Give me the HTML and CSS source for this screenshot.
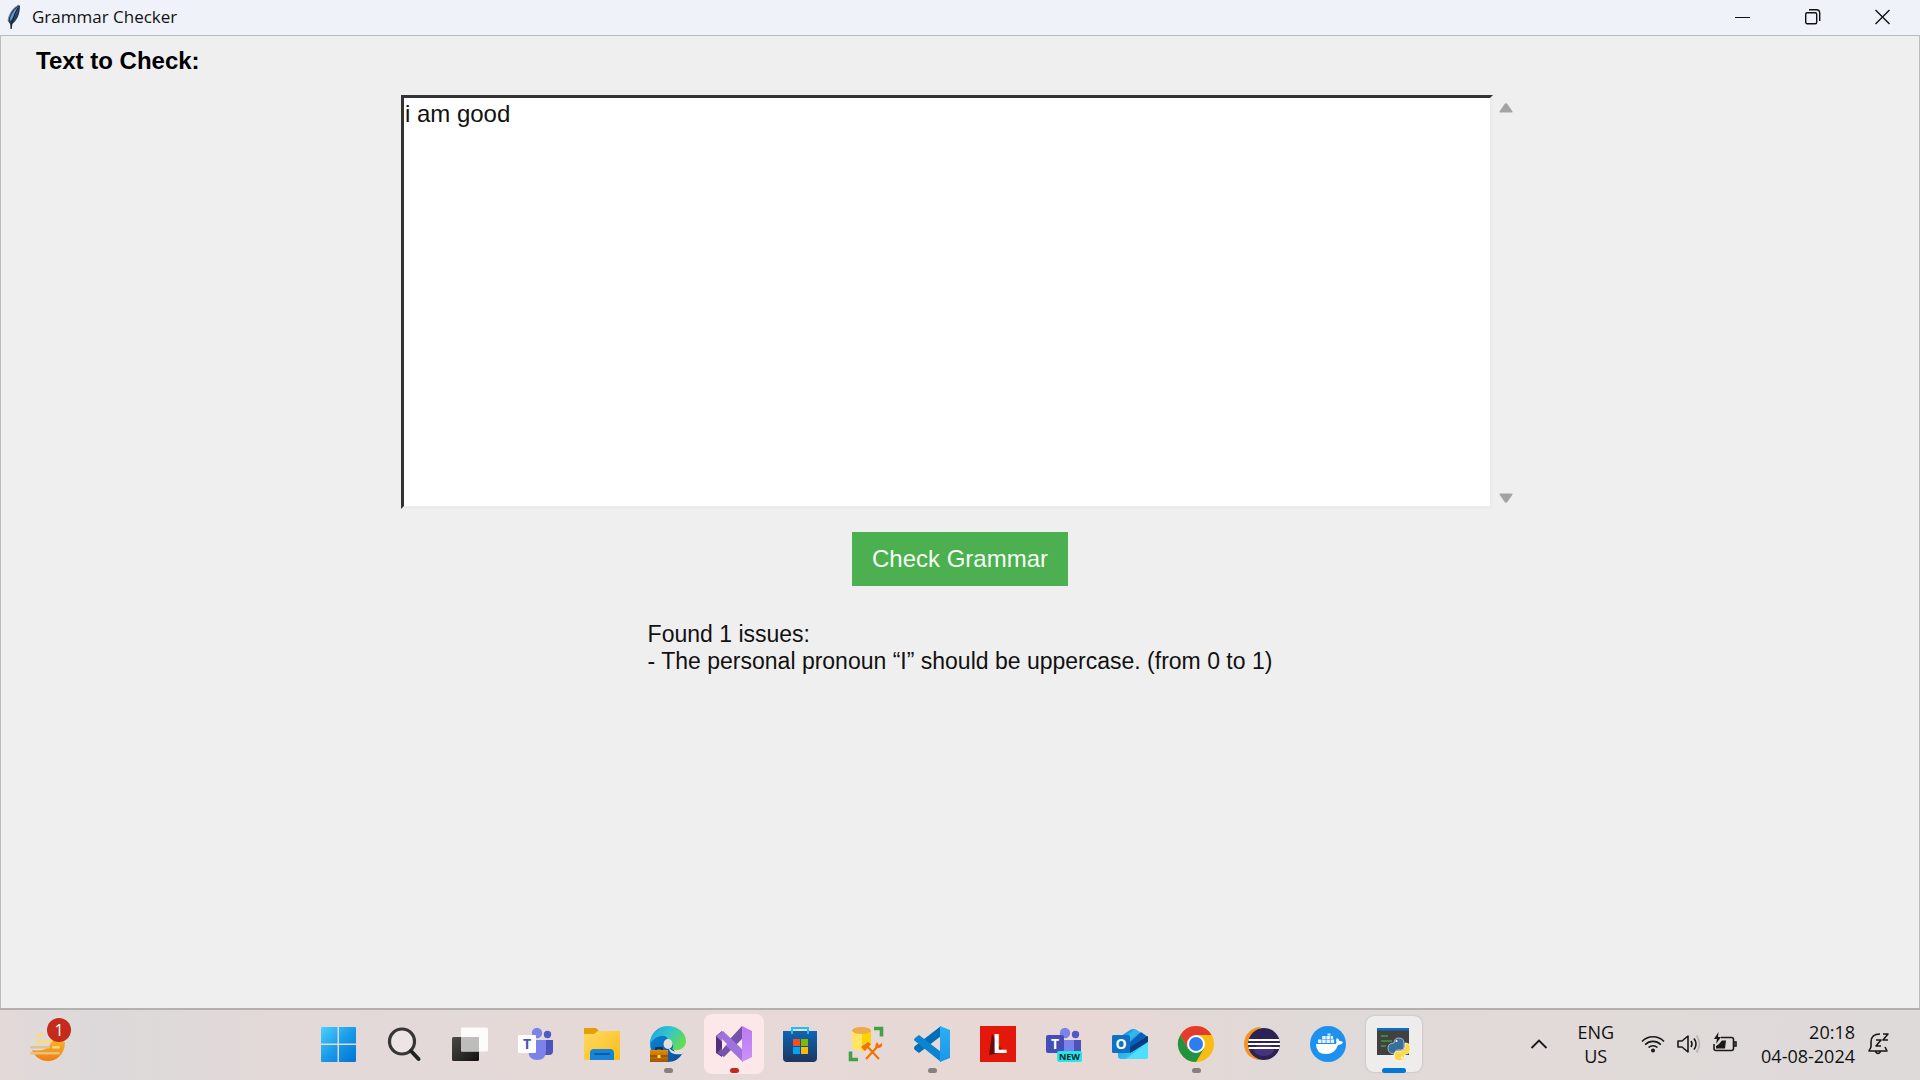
FILE: index.html
```html
<!DOCTYPE html>
<html lang="en">
<head>
<meta charset="utf-8">
<title>Grammar Checker</title>
<link rel="stylesheet" href="styles.css">
</head>
<body>
<div class="window">
  <header class="titlebar">
    <svg class="feather" width="16" height="26" viewBox="0 0 16 26" aria-hidden="true">
      <path d="M12 1C7 3 2 9 1 17l2 3 1 5 1-5c5-3 8-10 8-18z" fill="#23405f"/>
      <path d="M11 3C7 6 3 11 3 17c4-3 8-9 8-14z" fill="#5d9be0"/>
      <path d="M11 4C8 9 5 15 4 25" stroke="#222" stroke-width="1.3" fill="none"/>
      <path d="M12 1C7 3 2 9 1 17" stroke="#888" fill="none"/>
    </svg>
    <h1 class="title">Grammar Checker</h1>
    <div class="controls">
      <button class="control" aria-label="Minimize"><svg width="16" height="16" viewBox="0 0 16 16"><path d="M0 8.500h15" stroke="#111" fill="none"/></svg></button>
      <button class="control" aria-label="Restore"><svg width="16" height="16" viewBox="0 0 16 16" fill="none" stroke="#111" stroke-width="1.4"><rect x=".7" y="3.700" width="11" height="11" rx="1.500"/><path d="M4 .7h7.500q3.200 0 3.200 3.200V12"/></svg></button>
      <button class="control" aria-label="Close"><svg width="16" height="16" viewBox="0 0 16 16"><path d="M.5 1l14 14M14.500 1l-14 14" stroke="#111" stroke-width="1.4" fill="none"/></svg></button>
    </div>
  </header>

  <main class="content">
    <label class="label" for="source">Text to Check:</label>
    <div class="editor">
      <textarea class="source" id="source" rows="15" spellcheck="false">i am good</textarea>
      <div class="scrollbar">
        <button class="arrow" aria-label="Scroll up"><svg width="14" height="10" viewBox="0 0 14 10"><path d="M1 9.500Q0 9.500 .8 8L5.500 1.200Q7 -.5 8.500 1.200L13.200 8Q14 9.500 13 9.500z" fill="#a3a3a3"/></svg></button>
        <button class="arrow" aria-label="Scroll down"><svg width="14" height="10" viewBox="0 0 14 10"><path d="M1 .5Q0 .5 .8 2L5.500 8.800Q7 10.500 8.500 8.800L13.200 2Q14 .5 13 .5z" fill="#a3a3a3"/></svg></button>
      </div>
    </div>
    <button class="check">Check Grammar</button>
    <output class="result" for="source">Found 1 issues:
- The personal pronoun “I” should be uppercase. (from 0 to 1)</output>
  </main>
</div>

<footer class="taskbar">
  <svg width="0" height="0" class="defs" aria-hidden="true">
    <defs>
      <linearGradient id="win" x1="0" y1="0" x2="1" y2="1"><stop offset="0" stop-color="#4cd0fb"/><stop offset=".5" stop-color="#1a9be8"/><stop offset="1" stop-color="#0074d4"/></linearGradient>
      <linearGradient id="sun" x1="0" y1="0" x2="0" y2="1"><stop offset="0" stop-color="#f3b52c"/><stop offset="1" stop-color="#f47a14"/></linearGradient>
      <linearGradient id="dark" x1="0" y1="0" x2="1" y2="1"><stop offset="0" stop-color="#4a4a46"/><stop offset="1" stop-color="#111"/></linearGradient>
      <linearGradient id="folder" x1="0" y1="0" x2="1" y2="1"><stop offset="0" stop-color="#ffd966"/><stop offset="1" stop-color="#fbbd14"/></linearGradient>
      <linearGradient id="edgeTop" x1="0" y1="0" x2="1" y2=".5"><stop offset="0" stop-color="#1c9fe2"/><stop offset=".5" stop-color="#30c4d0"/><stop offset="1" stop-color="#62dd53"/></linearGradient>
      <linearGradient id="edgeLow" x1="0" y1="0" x2="1" y2="1"><stop offset="0" stop-color="#0a87d8"/><stop offset="1" stop-color="#0b4a98"/></linearGradient>
      <linearGradient id="case" x1="0" y1="0" x2="0" y2="1"><stop offset="0" stop-color="#e98b04"/><stop offset="1" stop-color="#9f5406"/></linearGradient>
      <linearGradient id="store" x1="0" y1="0" x2="0" y2="1"><stop offset="0" stop-color="#0d66b5"/><stop offset="1" stop-color="#20345f"/></linearGradient>
      <linearGradient id="vsR" x1="0" y1="0" x2="0" y2="1"><stop offset="0" stop-color="#b97af1"/><stop offset="1" stop-color="#cb92fb"/></linearGradient>
      <linearGradient id="code" x1="0" y1="0" x2="0" y2="1"><stop offset="0" stop-color="#2bb0f5"/><stop offset="1" stop-color="#1b96ea"/></linearGradient>
      <linearGradient id="out" x1="0" y1="0" x2="1" y2="1"><stop offset="0" stop-color="#1486d8"/><stop offset="1" stop-color="#4ae1ff"/></linearGradient>
    </defs>
  </svg>

  <div class="side">
    <button class="widgets" aria-label="Widgets">
      <svg width="36" height="30" viewBox="0 0 36 30">
        <path d="M2 17q12 2 17-4l4-6 12 2C35 21 27 28 18 28 10 28 4 23 2 17z" fill="url(#sun)"/>
        <g fill="#f3d873"><rect x="6" y="1" width="8" height="2.600" rx="1" fill="#fbdc6d"/><rect x="6" y="7" width="16" height="2.600" rx="1" fill="#fbdc6d"/><rect y="13" width="20" height="2.600" rx="1" fill="#dcc48b"/><rect x="22" y="13" width="8" height="2.600" rx="1"/><rect y="19" width="30" height="2.600" rx="1" fill="#e5c27a"/></g>
      </svg>
      <span class="badge">1</span>
    </button>
  </div>

  <nav class="apps" aria-label="Apps">
    <button class="app" aria-label="Start"><svg class="icon" viewBox="0 0 36 36"><path d="M2 1h15.500v16.500H1V2q0-1 1-1zM19 1h16q1 0 1 1v15.500H19zM1 19h16.500v17H2q-1 0-1-1zM19 19h17v16q0 1-1 1H19z" fill="url(#win)"/></svg></button>
    <button class="app" aria-label="Search"><svg class="icon" viewBox="0 0 36 36"><circle cx="16" cy="15.500" r="12.500" fill="#efe9e8" fill-opacity=".7" stroke="#363634" stroke-width="3.200"/><path d="M25 25l7.500 8" stroke="#222" stroke-width="4" stroke-linecap="round"/></svg></button>
    <button class="app" aria-label="Task view"><svg class="icon" viewBox="0 0 36 36"><rect y="11" width="27" height="24" rx="1.500" fill="url(#dark)"/><rect x="9" y="1.500" width="27" height="24" rx="1.500" fill="#fff" fill-opacity=".9"/><path d="M9 11h18v14.500H9z" fill="#bdbdbc"/></svg></button>
    <button class="app" aria-label="Teams"><svg class="icon" viewBox="0 0 36 36"><circle cx="29.500" cy="8.500" r="3.700" fill="#5059c9"/><path d="M26 14h9v11q0 4-4 4h-7z" fill="#4b53bc"/><circle cx="19" cy="7" r="5.200" fill="#7b83eb"/><path d="M14 14h14v11q0 9-9 9-8 0-8.500-8z" fill="#7b83eb"/><rect y="9" width="18" height="18" rx="1" fill="#fff"/><text x="9" y="23" class="glyph" font-size="14" fill="#4b53bc">T</text></svg></button>
    <button class="app" aria-label="File Explorer"><svg class="icon" viewBox="0 0 36 36"><path d="M0 2h12l3 3v4H0z" fill="#e0a006"/><path d="M0 8h10l4-3h22v29H0z" fill="url(#folder)"/><path d="M6 34v-7q0-4 4-4h16q4 0 4 4v7z" fill="#1784d8"/><path d="M11 28h14" stroke="#0a5ca8" stroke-width="2" stroke-linecap="round"/></svg></button>
    <button class="app" aria-label="Edge"><svg class="icon" viewBox="0 0 36 36"><path d="M0 16C3 5 24 4 23 20c0 9 9 9 10 6C30 33 24 36 18 36 8 36 0 30 0 16z" fill="url(#edgeLow)"/><path d="M0 18C0 7 8 0 18 0s18 7 18 15c0 8-9 11-14 8 3-3-1-9-4-9C17 7 5 9 0 18z" fill="url(#edgeTop)"/><ellipse cx="18" cy="18" rx="4.500" ry="5" fill="#e4dedc"/><path d="M19 22c4 5 11 4 14 3l-1 3c-6 1-13 0-13-6z" fill="#e4dedc"/><path d="M6 24v-2h6v2" stroke="#222" stroke-width="1.500" fill="none"/><rect y="24" width="18" height="12" fill="url(#case)"/><path d="M0 30h18" stroke="#764007"/><rect x="7.500" y="29" width="3" height="3" fill="#ffe04a"/></svg><span class="dot"></span></button>
    <button class="app alert" aria-label="Visual Studio"><svg class="icon" viewBox="0 0 36 36"><path d="M0 10l6-5v26l-6-4z" fill="#523078"/><path d="M26 0l1 12L8 31l-7-4z" fill="#7652ad"/><path d="M0 10l7-5 20 19v12z" fill="#9f72dc"/><path d="M6 13l5 5-5 6z" fill="#fce8e9"/><path d="M26 0l10 5v26l-10 5z" fill="url(#vsR)"/></svg><span class="dot red"></span></button>
    <button class="app" aria-label="Microsoft Store"><svg class="icon" viewBox="0 0 36 36"><path d="M10 7V2h16v5" fill="none" stroke="#25baf4" stroke-width="2"/><path d="M1 5h34v27q0 4-4 4H5q-4 0-4-4z" fill="url(#store)"/><path d="M10 8V5M26 8V5" stroke="#25baf4" stroke-width="2"/><path d="M11 13h7v7h-7z" fill="#f25022"/><path d="M19 13h7v7h-7z" fill="#7fba00"/><path d="M11 21h7v7h-7z" fill="#00a4ef"/><path d="M19 21h7v7h-7z" fill="#ffb900"/></svg></button>
    <button class="app" aria-label="Database tools"><svg class="icon" viewBox="0 0 36 36"><path d="M4 4h19v19q-10 4-19-1z" fill="#ffe466"/><path d="M14 4h9v18q-4 3-9 3z" fill="#fcd307"/><ellipse cx="13.500" cy="4.500" rx="9.500" ry="3.500" fill="#efa94b"/><path d="M26 2.500h7.500v8M2.500 25.500v8H10" fill="none" stroke="#43a047" stroke-width="3.600"/><path d="M18 33l11-12M31 33L17 18" stroke="#ecd9d4" stroke-width="5"/><path d="M18 33l12-13M31 33L18 19" stroke="#ef7408" stroke-width="2.200"/><path d="M13 21l7-5 3 2-6 7z" fill="#ef7408"/><path d="M29 16q-4 6 1 6 5 0 4-5l-3 2z" fill="#ef7408"/></svg></button>
    <button class="app" aria-label="Visual Studio Code"><svg class="icon" viewBox="0 0 36 36"><path d="M27 0v10L5 27l-4-3q-2-2 0-4z" fill="#006fb6"/><path d="M5 9l22 17v10L1 15q-2-1 0-3z" fill="#0b85cf"/><path d="M26 0l10 4v28l-10 4z" fill="url(#code)"/></svg><span class="dot"></span></button>
    <button class="app" aria-label="L"><svg class="icon" viewBox="0 0 36 36"><path d="M0 0h36v36H0z" fill="#e3170a"/><path d="M12 8L9 29l14-3z" fill="#6d0b05"/><text x="20" y="27" class="glyph" font-size="27" fill="#fff">L</text></svg></button>
    <button class="app" aria-label="Teams New"><svg class="icon" viewBox="0 0 36 36"><circle cx="29.500" cy="8.500" r="3.700" fill="#5059c9"/><path d="M24 14h11v12H24z" fill="#4b53bc"/><circle cx="19" cy="7" r="5.200" fill="#7b83eb"/><path d="M14 14h14v12H14z" fill="#7b83eb"/><rect y="9" width="18" height="18" rx="2" fill="#454db8"/><text x="9" y="23" class="glyph" font-size="14" fill="#fff">T</text><rect x="11" y="25" width="25" height="11" rx="2" fill="#28e5e5"/><text x="23.500" y="34" class="glyph" font-size="9" fill="#06292b">NEW</text></svg></button>
    <button class="app" aria-label="Outlook"><svg class="icon" viewBox="0 0 36 36"><path d="M6 12L18 4q3-2 6 0l12 8v18q0 3-3 3H9q-3 0-3-3z" fill="url(#out)"/><path d="M13 11l10-8 5 3-15 11z" fill="#32b7ef"/><path d="M18 16l11-10 7 5v4L20 26h-3z" fill="#0b5fb8"/><path d="M18 21l18-11v6L18 27z" fill="#053d84"/><path d="M14 33l22-17v14q0 3-3 3z" fill="#4fdefc"/><rect y="9" width="18" height="18" rx="1.500" fill="#0f70c4"/><text x="9" y="23" class="glyph" font-size="14" fill="#fff">O</text></svg></button>
    <button class="app" aria-label="Chrome"><svg class="icon" viewBox="0 0 36 36"><circle cx="18" cy="18" r="18" fill="#fbbc12"/><path d="M2.400 9a18 18 0 0 1 31.200 0H18l-8 14z" fill="#e33b2e"/><path d="M2.400 9a18 18 0 0 0 15.600 27l8-13.500-16 .5z" fill="#21923f"/><circle cx="18" cy="18" r="9" fill="#fff"/><circle cx="18" cy="18" r="7" fill="#2d7df0"/></svg><span class="dot"></span></button>
    <button class="app" aria-label="Eclipse"><svg class="icon" viewBox="0 0 36 36"><path d="M17 1C7 1 0 9 0 18s7 16 17 16C6 27 6 8 17 1z" fill="#f6921e"/><circle cx="20" cy="18" r="16" fill="#2c2255"/><ellipse cx="20" cy="24" rx="10" ry="6" fill="#44357e"/><path d="M4.500 14h31M4 18h32M4.500 22h31" stroke="#fff" stroke-width="1.800"/></svg></button>
    <button class="app" aria-label="Docker"><svg class="icon" viewBox="0 0 36 36"><circle cx="18" cy="18" r="18" fill="#1d91ed"/><path d="M6 18h20q1-2 0-4l1-2q2 1 2.500 3 2 0 3.500 1-1 3-5 3-3 9-12 9-10 0-10-10z" fill="#fff"/><path d="M8 13.500h3.500V17H8zM12.200 13.500h3.500V17h-3.500zM16.400 13.500h3.500V17h-3.500zM20.600 13.500h3.500V17h-3.500zM12.200 10h3.500v3h-3.500zM16.400 10h3.500v3h-3.500zM20.600 10h2.500v3h-2.500zM17.500 7.500h3V9.500h-3z" fill="#e6f3fd"/></svg></button>
    <button class="app active" aria-label="Python"><svg class="icon" viewBox="0 0 36 36"><path d="M1 2h32v27H1z" fill="#414141"/><path d="M1 2h32v2.500H1z" fill="#0a6fc0"/><path d="M5 10h7M5 15h11M5 20h5" stroke="#3f9b3f" stroke-width="1.400"/><path d="M18 17q0-5 5-5t5 5v4q0 3-3 3h-4q-2 0-2 4-7 0-7-6 0-5 6-5z" fill="#376f9f" stroke="#f1eeee" stroke-width=".6"/><path d="M29 17q5 0 5.500 5 0 6-5.500 6 0 7-5.500 7T18 30q0-5 4-5h3q4 0 4-4z" fill="#ffd84a" stroke="#fff" stroke-width=".8"/><circle cx="20.500" cy="15" r="1" fill="#fff"/><circle cx="26" cy="31.500" r="1" fill="#fff"/></svg><span class="dot wide"></span></button>
  </nav>

  <div class="tray">
    <button class="chevron" aria-label="Show hidden icons"><svg width="18" height="12" viewBox="0 0 18 12"><path d="M1.500 10L9 2.500l7.500 7.500" fill="none" stroke="#191919" stroke-width="1.800"/></svg></button>
    <button class="language">ENG<br>US</button>
    <button class="status" aria-label="Network, volume and battery">
      <svg width="24" height="24" viewBox="0 0 24 24" fill="none" stroke="#191919" stroke-width="1.600"><path d="M1 9.500a15 15 0 0 1 22 0M4.200 12.600a11 11 0 0 1 15.600 0M7.500 15.500a6.500 6.500 0 0 1 9 0"/><circle cx="12" cy="18.500" r="1.200" fill="#191919"/></svg>
      <svg width="24" height="24" viewBox="0 0 24 24" fill="none" stroke="#191919" stroke-width="1.600" stroke-linejoin="round"><path d="M1 9h4l6-5v16l-6-5H1zM14 9q2 3 0 6M17 6.500q4 5.500 0 11"/><path d="M19.500 3.500q6 8.500 0 17" stroke="#b5b0af"/></svg>
      <svg width="24" height="24" viewBox="0 0 24 24" fill="none" stroke="#191919" stroke-width="1.600"><path d="M8 5.500h10.500q2 0 2 2v9q0 2-2 2H3q-2 0-2-2V12M21 10h2v4h-2z"/><path d="M9 8.500h4l-1 8H3V14l3-2z" fill="#191919" stroke="none"/><path d="M5.500 0L1 7h3l-1 5 5-7H5z" fill="#191919" stroke="none"/></svg>
    </button>
    <button class="clock">20:18<br>04-08-2024</button>
    <button class="bell" aria-label="Notifications"><svg width="22" height="24" viewBox="0 0 22 24" fill="none" stroke="#191919" stroke-width="1.600" stroke-linejoin="round"><path d="M12 2Q3 2 3 10v5l-2 4h18l-2-4M7.500 19.500q2.500 4 5 0M15 2h5l-5 6h5M8 8h5l-5 6h5"/></svg></button>
  </div>
</footer>
</body>
</html>
```
FILE: styles.css
```css
* {
  box-sizing: border-box;
}

body {
  margin: 0;
  min-height: 100vh;
  display: flex;
  flex-direction: column;
  background: #efefef;
  color: #111;
  font-family: "Liberation Sans", Arial, sans-serif;
}

button {
  margin: 0;
  padding: 0;
  border: 0;
  background: none;
  color: inherit;
  font: inherit;
}

svg {
  display: block;
  flex: none;
}

.window {
  flex: 1;
  display: flex;
  flex-direction: column;
}

.titlebar {
  display: flex;
  align-items: center;
  height: 35px;
  padding: 0 2px 2px 7px;
  gap: 9px;
  background: #eff3f9;
}

.title {
  flex: 1;
  margin: 0;
  font: 400 17px/24px "Open Sans", "Noto Sans", sans-serif;
}

.controls {
  display: flex;
  height: 100%;
}

.control {
  width: 70px;
  display: flex;
  align-items: center;
  justify-content: center;
}

.content {
  flex: 1;
  display: flex;
  flex-direction: column;
  align-items: center;
  border: 1px solid #bdbdbd;
  border-bottom: 0;
  font-size: 24px;
  line-height: 27px;
}

.label {
  align-self: flex-start;
  margin: 11px 35px 21px;
  font-weight: 700;
  color: #000;
}

.editor {
  display: flex;
  width: 58.3%;
}

.source {
  flex: 1;
  min-width: 0;
  padding: 2px 1px 1px;
  border: 3px solid;
  border-color: #333 #ececec #ececec #333;
  background: #fff;
  color: inherit;
  font: inherit;
  resize: none;
  outline: 0;
  overflow: hidden;
}

.scrollbar {
  width: 26px;
  display: flex;
  flex-direction: column;
  justify-content: space-between;
  align-items: center;
  padding: 8px 0 6px;
}

.check {
  margin-top: 23px;
  padding: 13px 20px 14px;
  background: #4caf50;
  color: #f4fff4;
}

.result {
  margin: 35px 20px;
  font-size: 23px;
  white-space: pre-line;
}

.taskbar {
  display: flex;
  align-items: stretch;
  height: 72px;
  border-top: 2px solid #b5afae;
  background: linear-gradient(90deg, #e3d9d8, #dcd9da 5%, #e2d9d8 14%, #e5d9d7 36%, #e8d8d5 56%, #dfd9d8 68%, #e1dad9 80%, #dedad9);
  font: 400 18px/24px "Open Sans", "Noto Sans", sans-serif;
}

.defs {
  position: absolute;
}

.side {
  width: 305px;
  display: flex;
  padding-left: 30px;
}

.widgets {
  position: relative;
  padding-top: 6px;
}

.badge {
  position: absolute;
  top: 8px;
  left: 17px;
  width: 24px;
  height: 24px;
  border-radius: 50%;
  background: #c42b1c;
  color: #fff;
  font-size: 16px;
  line-height: 24px;
  text-align: center;
}

.apps {
  display: flex;
  align-items: center;
  gap: 6px;
  padding: 0 3px 2px;
}

.app {
  position: relative;
  width: 60px;
  height: 60px;
  display: flex;
  align-items: center;
  justify-content: center;
  border-radius: 8px;
}

.icon {
  width: 36px;
  height: 36px;
  overflow: visible;
}

.glyph {
  font-family: "Open Sans", sans-serif;
  font-weight: 700;
  text-anchor: middle;
}

.alert {
  background: #fce8e9;
}

.active {
  width: 56px;
  height: 56px;
  margin: 0 2px;
  background: #efecec;
  box-shadow: 0 0 2px #aaa;
}

.dot {
  position: absolute;
  bottom: 1px;
  left: 50%;
  width: 9px;
  height: 5px;
  margin-left: -4px;
  border-radius: 3px;
  background: #85807f;
}

.red {
  background: #c42b1c;
}

.wide {
  bottom: -1px;
  width: 24px;
  margin-left: -12px;
  background: #0078d4;
}

.tray {
  flex: 1;
  display: flex;
  align-items: center;
  justify-content: flex-end;
  padding: 0 30px 2px 0;
}

.language {
  margin: 0 27px 0 29px;
}

.status {
  display: flex;
  gap: 12px;
}

.clock {
  margin: 0 13px 0 24px;
  text-align: right;
}
```
